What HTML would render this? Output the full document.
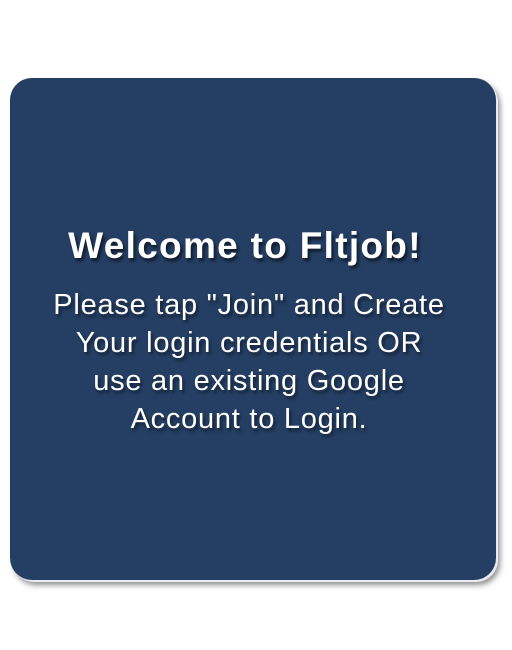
<!DOCTYPE html>
<html><head><meta charset="utf-8"><style>
html,body{margin:0;padding:0;background:#fff;width:512px;height:650px;overflow:hidden}
.card{position:absolute;left:10px;top:78px;width:486px;height:502px;background:#253f64;border-radius:22px;box-shadow:2px 2px 0 #e8ecf2,4px 5px 6px rgba(0,0,0,0.45);font-family:"Liberation Sans",sans-serif;color:#fff;text-align:center}
h1{position:absolute;left:-36px;right:-20px;top:147px;margin:0;font-size:37px;letter-spacing:1.3px;font-weight:bold;text-shadow:2px 3px 3px rgba(0,0,0,0.6)}
p{position:absolute;left:-28px;right:-20px;top:208px;margin:0;font-size:29px;letter-spacing:0.75px;line-height:38px;text-shadow:2px 3px 3px rgba(0,0,0,0.5)}
</style></head><body>
<div class="card">
<h1>Welcome to Fltjob!</h1>
<p>Please tap "Join" and Create<br>Your login credentials OR<br>use an existing Google<br>Account to Login.</p>
</div>
</body></html>
